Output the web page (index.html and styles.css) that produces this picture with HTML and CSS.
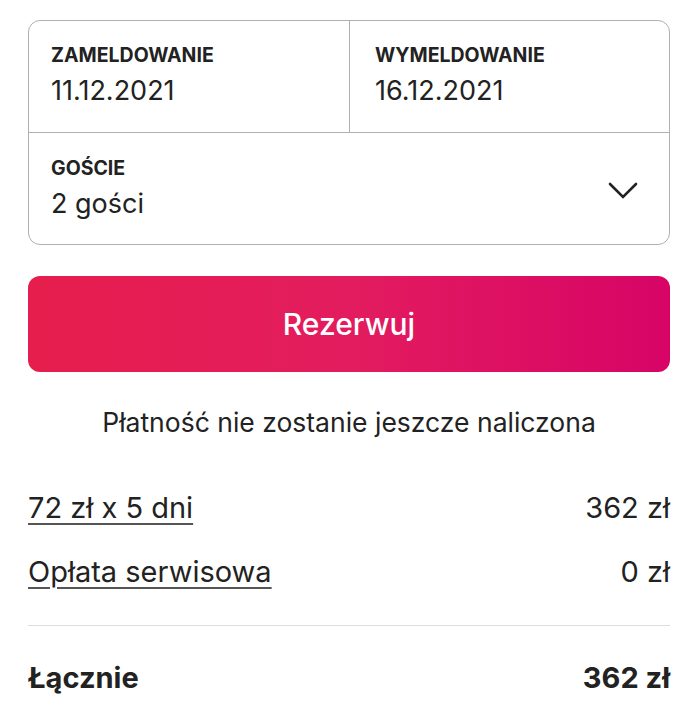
FILE: index.html
```html
<!DOCTYPE html>
<html lang="pl">
<head>
<meta charset="utf-8">
<link rel="stylesheet" href="styles.css">
</head>
<body>
<div class="panel">
  <div class="picker">
    <div class="dates">
      <div class="cell">
        <div class="label">ZAMELDOWANIE</div>
        <div class="value">11.12.2021</div>
      </div>
      <div class="cell cell-right">
        <div class="label">WYMELDOWANIE</div>
        <div class="value">16.12.2021</div>
      </div>
    </div>
    <div class="guests">
      <div class="cell">
        <div class="label">GOŚCIE</div>
        <div class="value">2 gości</div>
      </div>
      <svg class="chevron" viewBox="0 0 32 32" width="32" height="32" aria-hidden="true">
        <path d="M3 11 L16 24 L29 11" fill="none" stroke="#222" stroke-width="2.6" stroke-linecap="round" stroke-linejoin="miter"/>
      </svg>
    </div>
  </div>
  <button class="reserve">Rezerwuj</button>
  <p class="note">Płatność nie zostanie jeszcze naliczona</p>
  <div class="row first">
    <span class="link">72 zł x 5 dni</span>
    <span>362 zł</span>
  </div>
  <div class="row">
    <span class="link">Opłata serwisowa</span>
    <span>0 zł</span>
  </div>
  <div class="total">
    <span>Łącznie</span>
    <span>362 zł</span>
  </div>
</div>
</body>
</html>
```
FILE: styles.css
```css
html, body {
  margin: 0;
  padding: 0;
  background: #ffffff;
}
body {
  font-family: "Inter", "Noto Sans", sans-serif;
  color: #222222;
}
.panel {
  padding: 20px 28px 0 28px;
}
.picker {
  border: 1px solid #b0b0b0;
  border-radius: 12px;
}
.dates {
  display: grid;
  grid-template-columns: 1fr 1fr;
  border-bottom: 1px solid #b0b0b0;
  height: 111px;
}
.cell {
  padding: 22px 22px 0 22px;
}
.cell-right {
  border-left: 1px solid #b0b0b0;
  padding-left: 25px;
}
.label {
  font-size: 19.5px;
  font-weight: 700;
  line-height: 24px;
}
.value {
  font-size: 27px;
  line-height: 34px;
  margin-top: 7px;
}
.guests {
  display: flex;
  align-items: center;
  justify-content: space-between;
  height: 111px;
}
.guests .cell {
  padding-top: 0;
}
.chevron {
  margin-right: 30px;
}
.reserve {
  display: block;
  width: 100%;
  height: 96px;
  margin-top: 31px;
  border: none;
  border-radius: 12px;
  background: linear-gradient(90deg, #e61e4d 0%, #e31c5f 50%, #d70466 100%);
  color: #ffffff;
  font-family: inherit;
  font-size: 30px;
  font-weight: 500;
}
.note {
  margin: 33px 0 0 0;
  text-align: center;
  font-size: 26.5px;
  line-height: 34px;
}
.row {
  display: flex;
  justify-content: space-between;
  font-size: 29px;
  line-height: 36px;
  margin-top: 28px;
}
.row.first {
  margin-top: 51px;
}
.link {
  text-decoration: underline;
  text-decoration-thickness: 1.5px;
  text-decoration-color: #555555;
  text-underline-offset: 5px;
}
.total {
  display: flex;
  justify-content: space-between;
  font-size: 29px;
  font-weight: 700;
  line-height: 36px;
  border-top: 1px solid #dddddd;
  margin-top: 35px;
  padding-top: 34px;
}
```
